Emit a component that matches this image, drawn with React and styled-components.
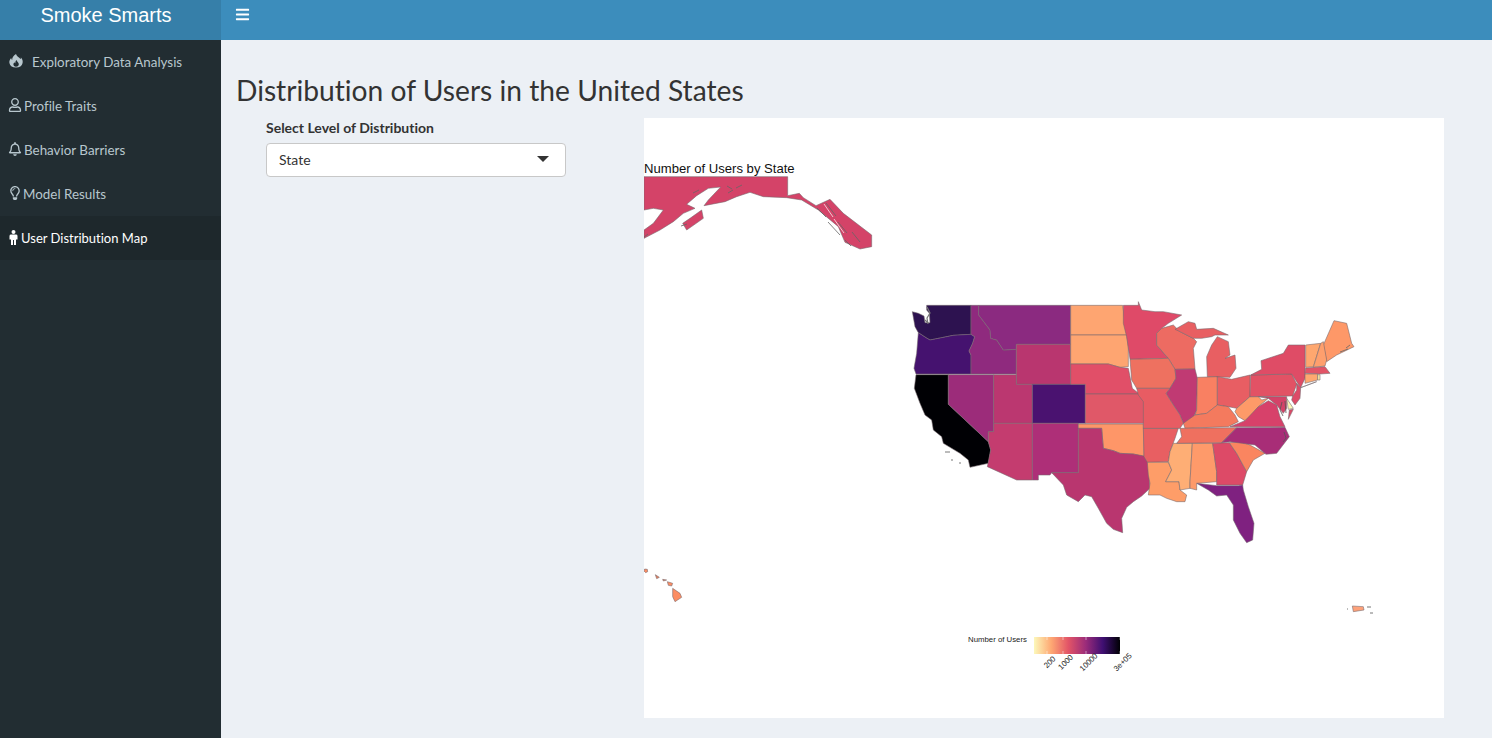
import React from 'react'
import styled, { createGlobalStyle } from 'styled-components'
import { FaBars, FaRegUser, FaRegBell, FaRegLightbulb } from 'react-icons/fa'

const GlobalStyle = createGlobalStyle`
  html, body {
    margin: 0;
    height: 100%;
    overflow: hidden;
    background: #ecf0f5;
    font-family: 'Lato', 'Liberation Sans', sans-serif;
    font-variant-ligatures: none;
  }
`

const Page = styled.div`
  display: grid;
  grid-template-columns: 221px 1fr;
  grid-template-rows: 40px 1fr;
  height: 738px;
`

const Logo = styled.div`
  background: #367fa9;
  color: #fff;
  font-family: 'Liberation Sans', Arial, sans-serif;
  font-size: 20px;
  line-height: 30px;
  text-align: center;
  padding-right: 9px;
`

const Navbar = styled.div`
  background: #3c8dbc;
  color: #fff;
  padding: 7px 0 0 14px;
  line-height: 14px;
`

const Sidebar = styled.nav`
  background: #222d32;
`

const MenuItem = styled.div`
  display: flex;
  align-items: center;
  box-sizing: border-box;
  height: 44px;
  padding-left: ${p => p.$left || 8}px;
  gap: ${p => p.$gap || 2}px;
  font-size: ${p => (p.$active ? 13 : 13.4)}px;
  color: ${p => (p.$active ? '#fff' : '#b8c7ce')};
  background: ${p => (p.$active ? '#1e282c' : 'transparent')};
  svg { flex: none; position: relative; top: -1px; }
`

const Content = styled.main`
  padding: 30px 0 0 15px;
`

const Title = styled.h2`
  margin: 0;
  font-size: 28.2px;
  font-weight: 400;
  line-height: 40px;
  color: #333;
`

const Row = styled.div`
  display: grid;
  grid-template-columns: 408px 800px;
  margin-top: 8px;
`

const Panel = styled.div`
  padding: 2px 0 0 30px;
`

const Label = styled.div`
  font-size: 14px;
  font-weight: 700;
  line-height: 16px;
  color: #333;
  margin-bottom: 7px;
`

const Select = styled.div`
  box-sizing: border-box;
  display: flex;
  align-items: center;
  justify-content: space-between;
  width: 300px;
  height: 34px;
  padding: 0 16px 2px 12px;
  background: #fff;
  border: 1px solid #c8c8c8;
  border-radius: 4px;
  font-size: 14px;
  color: #333;
`

const Caret = styled.span`
  width: 0;
  height: 0;
  border-left: 6px solid transparent;
  border-right: 6px solid transparent;
  border-top: 6px solid #333;
  margin-top: -1px;
`

const Plot = styled.svg`
  display: block;
  width: 800px;
  height: 600px;
  background: #fff;
`

const FlameIcon = () => (
  <svg width="14" height="14" viewBox="0 0 14 14" fill="currentColor">
    <path
      fillRule="evenodd"
      d="M7 0C7.5 2.5 10 3 11.5 5 12 4.5 12 4 11.8 3.2 13.5 5 14 7 13.6 9 13 12 10.5 13.5 7 13.5 3.5 13.5 1 12 .4 9 0 7 1 5.2 2.2 4 2.3 5 2.6 5.5 3.2 6 3 3.5 4.5 1.5 7 0ZM7.5 6C8 8 10 8.5 9.8 10.5 9.6 12 8.3 12.7 7 12.7 5.5 12.7 4.4 11.8 4.4 10.3 4.4 9.4 5 8.7 5.6 8.2 5.7 8.8 6 9 6.4 9.2 6.3 8 6.6 6.8 7.5 6Z"
    />
  </svg>
)

const PersonIcon = () => (
  <svg width="9" height="15" viewBox="0 0 9 15" fill="currentColor">
    <circle cx="4.5" cy="2" r="2" />
    <path d="M.5 9.5V6Q.5 4.6 2 4.6H7Q8.5 4.6 8.5 6V9.5H7V15H5V10H4V15H2V9.5Z" />
  </svg>
)

// state shapes, in coordinates of 3x crops of the map
const west = [
  ['#2d1250', '80,46 213,46 213,133 160,136 125,143 90,150 78,143 55,128 45,110 37,65 55,70 72,78 75,98 90,98 88,70 80,60'],
  ['#45126f', '55,128 78,143 90,150 125,143 160,136 213,133 224,140 218,160 207,183 213,195 213,252 48,252 42,235 50,190'],
  ['#000004', '48,254 145,254 145,343 265,455 272,480 265,520 210,532 205,510 180,490 130,460 125,440 100,420 95,390 75,375 60,340 43,295'],
  ['#9c2c7a', '145,254 281,254 281,425 265,425 265,455 145,343'],
  ['#8f2a7e', '213,46 236,46 236,75 270,120 272,145 290,150 310,180 349,178 349,252 213,252 213,195 207,183 218,160 224,140 213,133'],
  ['#8b2a80', '236,46 512,46 512,163 349,163 349,178 310,180 290,150 272,145 270,120 236,75'],
  ['#b9366f', '349,163 512,163 512,283 349,283'],
  ['#bb3770', '281,254 349,254 349,283 397,283 397,400 281,400'],
  ['#4a1270', '397,283 556,283 556,400 397,400'],
  ['#c43c6f', '281,400 397,400 397,570 350,570 262,530 272,480 265,455 265,425 281,425'],
  ['#ae2f78', '397,400 535,400 535,548 455,548 450,555 415,555 415,570 397,570'],
  ['#fea571', '512,46 668,46 675,95 680,135 512,135'],
  ['#fea571', '512,135 680,135 685,170 685,230 660,232 625,222 512,222'],
  ['#e14f68', '512,222 625,222 660,232 685,235 697,295 718,312 556,312 556,283 512,283'],
  ['#e05868', '556,312 718,312 740,340 740,400 556,400'],
]

const south = [
  ['#fe9668', '175,12 370,12 372,110 340,102 300,100 280,92 250,85 245,25 175,25'],
  ['#b9366f', '175,25 245,25 250,85 280,92 300,100 340,102 372,108 385,130 388,175 390,205 365,228 340,245 320,262 305,295 308,338 280,328 260,310 235,265 215,230 195,225 175,245 140,225 130,195 95,158 175,158'],
  ['#e85f62', '370,25 475,25 465,55 450,95 445,125 382,127 372,110'],
  ['#fe9d68', '382,127 445,127 455,150 437,185 477,185 480,210 500,225 495,245 470,245 440,235 420,225 385,225 390,190 385,165'],
  ['#feae75', '460,70 517,70 510,185 510,205 480,210 477,185 437,185 455,150 445,125 450,95'],
  ['#fe9a6a', '517,70 578,70 590,155 590,185 530,190 530,210 510,205 510,185'],
  ['#dd4a67', '578,70 628,68 650,100 680,155 668,195 590,195 590,155'],
  ['#fa8560', '628,68 660,65 690,75 735,100 700,120 680,155 650,100'],
  ['#7f2180', '530,190 590,197 655,197 668,195 670,210 685,260 702,310 698,360 680,368 660,340 640,300 640,255 620,225 590,228 565,210'],
]

const east = [
  ['#df4a68', '-20,46 25,46 25,35 35,60 75,65 100,65 155,75 115,100 95,115 80,130 80,165 115,205 0,208 -10,140 -20,100'],
  ['#ed6b62', '95,115 130,105 150,125 190,145 200,155 190,175 195,237 135,238 115,205 80,165 80,130'],
  ['#e85f62', '232,260 230,200 245,165 262,140 295,155 300,195 285,205 315,195 318,235 300,262'],
  ['#e85f62', '135,118 175,95 195,100 200,118 250,115 295,135 255,135 245,140 215,145 190,145 150,125'],
  ['#ee7160', '0,208 115,205 135,238 138,265 120,295 20,295 5,270'],
  ['#c03a73', '135,238 195,237 202,265 200,360 185,395 160,400 150,375 130,345 108,310 120,295 138,265'],
  ['#f98062', '202,262 262,260 262,345 230,370 195,375 200,360'],
  ['#e85e63', '262,260 305,268 360,255 360,320 320,355 295,350 262,345'],
  ['#f47a5e', '160,400 195,375 230,370 262,345 295,350 315,375 325,395 295,410 165,415'],
  ['#ef705f', '150,415 320,413 275,458 140,460 155,440'],
  ['#e85c63', '20,295 120,295 108,310 130,345 150,375 160,400 150,415 40,415 40,335 25,315'],
  ['#fe9a68', '360,320 385,320 395,330 415,325 385,350 365,375 345,392 325,380 315,365 320,355'],
  ['#d7416a', '300,410 345,392 385,350 415,332 440,345 450,380 465,410'],
  ['#a82d77', '275,458 320,413 465,412 478,440 440,490 408,493 375,465 300,455'],
  ['#e25265', '362,255 485,252 500,282 488,318 360,320'],
  ['#df4c66', '362,255 395,238 393,212 460,190 475,165 525,165 525,265 512,293 500,275 485,252'],
  ['#dd4a67', '500,280 512,293 510,325 495,345 485,330 488,318 500,300'],
  ['#d44368', '385,320 470,320 470,355 460,370 440,345 415,325'],
  ['#fcf8b7', '470,325 490,355 475,358'],
  ['#dd4a67', '478,360 490,358 475,388'],
  ['#fe9868', '580,165 612,92 650,100 665,160 672,170 620,195 590,215'],
  ['#fea76f', '527,165 572,160 550,230 527,232'],
  ['#fe9f6d', '572,160 580,155 590,210 585,228 550,232'],
  ['#e25467', '527,234 585,230 600,250 570,252 525,250'],
  ['#fea870', '525,252 563,252 563,270 525,280'],
  ['#fdeca5', '563,254 570,254 570,270 563,270'],
  ['#dd4a67', '512,293 560,275 520,290'],
]

const alaska = [
  ['#d44368', '12,65 443,65 443,122 478,115 490,128 528,152 570,133 610,175 695,240 695,275 660,282 615,262 595,215 535,165 485,135 440,128 370,125 330,112 290,125 255,140 192,152 205,135 242,96 205,100 170,122 140,148 165,160 130,175 100,200 60,225 12,250 12,225 40,205 70,165 40,160 12,165'],
  ['#d44368', '128,205 150,190 185,165 190,190 140,225'],
]

const hawaii = [
  ['#fc8d63', '98,85 120,100 125,112 105,125 98,110'],
  ['#fc8d63', '82,65 98,70 95,78 85,76'],
  ['#e8805c', '46,44 58,52 50,56'],
  ['#e8805c', '68,58 80,60 70,63'],
  ['#fc8d63', '14,27 22,28 23,35 17,38 12,33'],
]

const puerto = [['#fea27a', '37,33 70,35 72,45 40,50']]

const Shapes = ({ x, y, list }) => (
  <g transform={`translate(${x} ${y}) scale(${1 / 3})`}>
    {list.map(([fill, points], i) => (
      <polygon key={i} points={points} fill={fill} stroke="#75696e" strokeWidth="1.7" strokeLinejoin="round" />
    ))}
  </g>
)

const legendTicks = [
  [1047, '200'],
  [1063, '1000'],
  [1086, '10000'],
  [1120, '3e+05'],
]

const UsersMap = () => (
  <Plot viewBox="644 118 800 600">
    <defs>
      <linearGradient id="magma">
        <stop offset="0" stopColor="#fcf8ba" />
        <stop offset="0.2" stopColor="#fea873" />
        <stop offset="0.4" stopColor="#e25467" />
        <stop offset="0.6" stopColor="#9c2c7a" />
        <stop offset="0.8" stopColor="#3f0f72" />
        <stop offset="1" stopColor="#000004" />
      </linearGradient>
    </defs>
    <text x="644" y="173" fontFamily="'Liberation Sans', Arial, sans-serif" fontSize="13.1" fill="#111">
      Number of Users by State
    </text>
    <Shapes x={640} y={155} list={alaska} />
    {/* southeast alaska channels and islets */}
    <g fill="none" stroke="#fff" strokeWidth="0.7">
      <path d="M824 204l9 13M834 219l10 14M830 222l9 14" />
    </g>
    <g fill="none" stroke="#666" strokeWidth="0.8">
      <path d="M817 208l9 9M826 203l10 13M828 222l12 13M838 222l9 11M852 232l8 10M845 240l6 6" />
      <path d="M736 188l6-3M733 190l-5 3M648 234l-4 3M681 226l6-2M693 193l6-3M727 186l5 3" />
    </g>
    <Shapes x={900} y={290} list={west} />
    {/* puget sound and channel islands */}
    <path d="M927 307l3 6-3 5 1 6M925 320l3 3" fill="none" stroke="#777" strokeWidth="1.2" />
    <path d="M945 452h5M951 460h2M959 463h2" fill="none" stroke="#555" strokeWidth="0.8" />
    <Shapes x={1020} y={420} list={south} />
    <Shapes x={1130} y={290} list={east} />
    {/* chesapeake and outer banks */}
    <path d="M1282 402l-2 8 3 6M1285 401l1 12M1284 432l2 6-3 4" fill="none" stroke="#555" strokeWidth="0.8" />
    <path d="M1340 352l8-3M1346 348l4-3" fill="none" stroke="#666" strokeWidth="0.8" />
    <Shapes x={640} y={560} list={hawaii} />
    <Shapes x={1340} y={595} list={puerto} />
    <path d="M1367 607h4M1370 613h3M1347 609h1" stroke="#777" strokeWidth="1" />
    {/* legend */}
    <text x="968" y="642" fontFamily="'Liberation Sans', Arial, sans-serif" fontSize="7.8" fill="#222">
      Number of Users
    </text>
    <rect x="1034" y="637" width="86" height="17" fill="url(#magma)" />
    {legendTicks.map(([x, label]) => (
      <g key={label}>
        <path d={`M${x} 637v3M${x} 651v3`} stroke="#fff" strokeWidth="0.6" opacity="0.8" />
        <text
          transform={`translate(${x + 4.5} 664) rotate(-45)`}
          textAnchor="middle"
          fontFamily="'Liberation Sans', Arial, sans-serif"
          fontSize="7.8"
          fill="#222"
        >
          {label}
        </text>
      </g>
    ))}
  </Plot>
)

const App = () => (
  <Page>
    <GlobalStyle />
    <Logo>Smoke Smarts</Logo>
    <Navbar><FaBars size={15} /></Navbar>
    <Sidebar>
      <MenuItem $left={9} $gap={9}><FlameIcon />Exploratory Data Analysis</MenuItem>
      <MenuItem><FaRegUser size={14} />Profile Traits</MenuItem>
      <MenuItem><FaRegBell size={14} />Behavior Barriers</MenuItem>
      <MenuItem $gap={1}><FaRegLightbulb size={14} />Model Results</MenuItem>
      <MenuItem $active $left={9} $gap={3}><PersonIcon />User Distribution Map</MenuItem>
    </Sidebar>
    <Content>
      <Title>Distribution of Users in the United States</Title>
      <Row>
        <Panel>
          <Label>Select Level of Distribution</Label>
          <Select>State<Caret /></Select>
        </Panel>
        <UsersMap />
      </Row>
    </Content>
  </Page>
)

export default App
